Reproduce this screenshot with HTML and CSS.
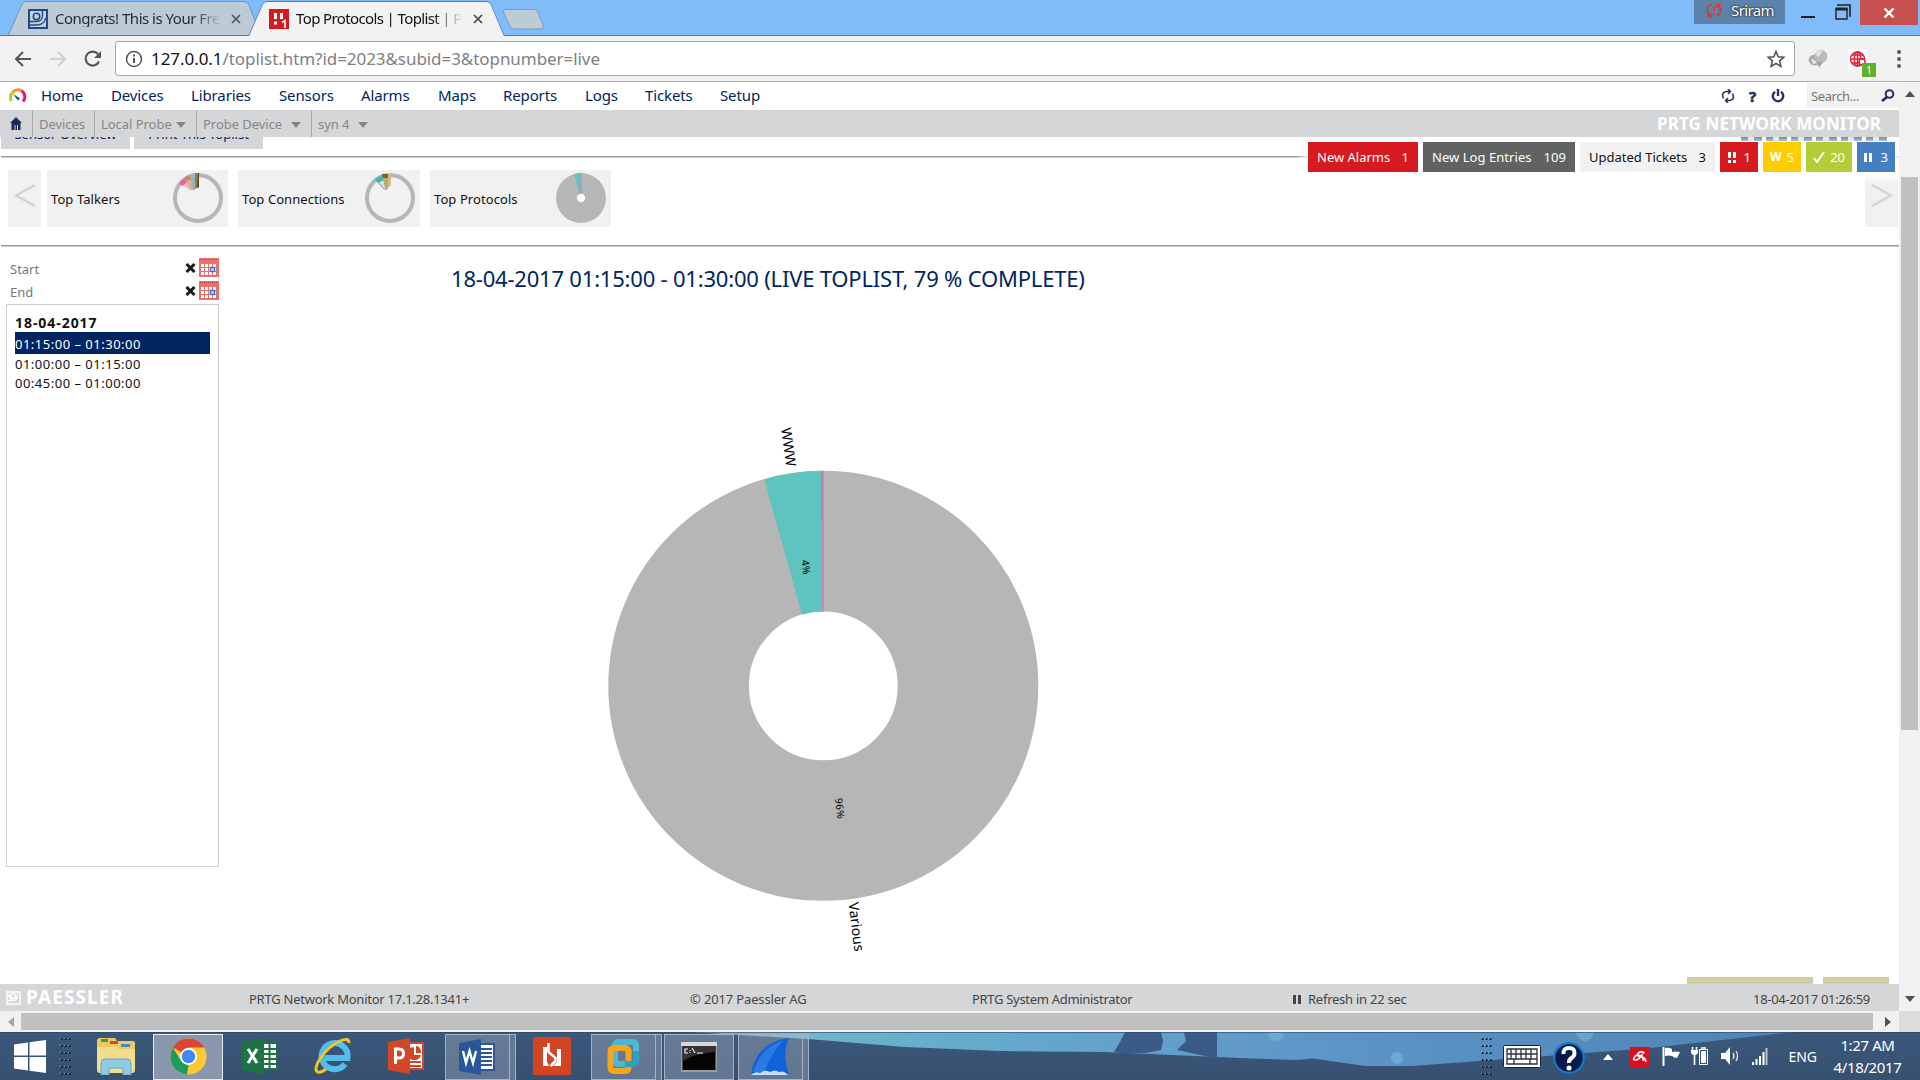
FILE: index.html
```html
<!DOCTYPE html>
<html lang="en">
<head>
<meta charset="utf-8">
<title>Top Protocols | Toplist | PRTG Network Monitor</title>
<link rel="stylesheet" href="styles.css">
</head>
<body>
<header class="tabstrip">
  <svg class="tab-shapes" width="560" height="36" viewBox="0 0 560 36">
    <path d="M8 36L22 4Q23.500 1.500 26 1.500H243Q247 1.500 248.500 4L261 36Z" fill="#bdcbd6" stroke="#6f93b8"/>
    <path d="M0 35.500H249L263 4Q264.500 1.500 267 1.500H486Q489 1.500 490.500 4L504 35.500H560" fill="none" stroke="#4f7db0"/>
    <path d="M249 36.500L263 4.500Q264.500 2 267 2H486Q489 2 490.500 4.500L504 36.500Z" fill="#f2f2f2"/>
    <path d="M505 9.500H534Q536.500 9.500 537.500 12L543.500 26Q544 29 541 29H514Q511 29 510 26L503.500 12Q503 9.500 505 9.500Z" fill="#bdcbd6" stroke="#7f9dbd"/>
  </svg>
  <div class="tab tab-first">
    <svg width="20" height="20" viewBox="0 0 20 20"><rect x="1" y="1" width="18" height="18" fill="#c3cfdc" stroke="#23488a" stroke-width="2"/><circle cx="8.500" cy="7.500" r="3.200" fill="none" stroke="#23488a" stroke-width="1.500"/><path d="M2 12.500H8.500Q14.500 12.500 14.500 6V2M2 16H9Q17 15.500 17.500 9" fill="none" stroke="#23488a" stroke-width="1.300"/></svg>
    <span class="tab-title">Congrats! This is Your Fre</span>
    <svg width="10" height="10" viewBox="0 0 10 10"><path d="M1 1l8 8M9 1l-8 8" stroke="#555" stroke-width="1.700"/></svg>
  </div>
  <div class="tab tab-active">
    <svg width="20" height="20" viewBox="0 0 20 20"><rect width="20" height="20" fill="#d71920"/><path d="M5 4h3v6H5zM11 4h3v6h-3zM5 12.500h3v3H5z" fill="#fff"/><path d="M13 13.500l3-2v7.500" fill="none" stroke="#fff" stroke-width="1.600"/></svg>
    <span class="tab-title">Top Protocols | Toplist | P</span>
    <svg width="10" height="10" viewBox="0 0 10 10"><path d="M1 1l8 8M9 1l-8 8" stroke="#444" stroke-width="1.700"/></svg>
  </div>
  <div class="window-tools">
    <div class="profile">
      <svg width="16" height="15" viewBox="0 0 16 15" fill="none" stroke="#d83a2c" stroke-width="1.700"><path d="M5.500 1.500H4Q1.500 3 1.500 7Q1.500 11 4 13M11 13.500Q14.500 11 14.500 7.500Q14.500 4 11.500 2M1 12.500l3.500 1V10M15 1.500h-4V5M8 3v5M8 10v2"/></svg>
      <span>Sriram</span>
    </div>
    <svg class="win-icon" width="14" height="20" viewBox="0 0 14 20"><path d="M0 17h14" stroke="#222" stroke-width="2"/></svg>
    <svg class="win-max" width="16" height="16" viewBox="0 0 16 16"><path d="M3 2V1h12v11h-1" fill="none" stroke="#222" stroke-width="1.600"/><path d="M1 5h11v10H1z" fill="none" stroke="#222" stroke-width="1.400"/><path d="M.5 5h12" stroke="#222" stroke-width="3"/></svg>
    <div class="win-close"><svg width="12" height="10" viewBox="0 0 12 10"><path d="M1.500 .5l9 9M10.500 .5l-9 9" stroke="#fff" stroke-width="2.400"/></svg></div>
  </div>
</header>

<div class="toolbar">
  <svg class="nav-arrow" width="18" height="16" viewBox="0 0 18 16" fill="none" stroke="#555" stroke-width="2"><path d="M17 8H2M9 1L2 8l7 7"/></svg>
  <svg class="nav-arrow" width="18" height="16" viewBox="0 0 18 16" fill="none" stroke="#d0d0d0" stroke-width="2"><path d="M1 8h15M9 1l7 7-7 7"/></svg>
  <svg class="nav-reload" width="18" height="18" viewBox="0 0 18 18"><path d="M15 11.500A7 7 0 1 1 14 4" fill="none" stroke="#555" stroke-width="2.200"/><path d="M17 1v7h-7z" fill="#555"/></svg>
  <div class="url">
    <svg width="18" height="18" viewBox="0 0 18 18"><circle cx="9" cy="9" r="7.500" fill="none" stroke="#555" stroke-width="1.500"/><path d="M9 8v5M9 4.500v2" stroke="#555" stroke-width="2"/></svg>
    <span class="url-text"><b>127.0.0.1</b>/toplist.htm?id=2023&amp;subid=3&amp;topnumber=live</span>
    <svg width="18" height="18" viewBox="0 0 18 18"><path d="M9 1.500l2.200 5.200 5.600.5-4.200 3.700 1.300 5.500L9 13.500l-4.900 2.900 1.300-5.500L1.200 7.200l5.600-.5z" fill="none" stroke="#555" stroke-width="1.600"/></svg>
  </div>
  <svg class="ext-globe" width="20" height="20" viewBox="0 0 20 20"><ellipse cx="7.500" cy="11" rx="7" ry="5.500" fill="#aaa"/><circle cx="13" cy="7.500" r="6.500" fill="#bbb"/><path d="M8 4q3-3 6-2-1 4-5 6zM3 10q4 0 6 4l-4 1z" fill="#e3e3e3"/><path d="M10 13l1 6 4-6z" fill="#a0a0a0"/></svg>
  <div class="ext-badged">
    <svg width="20" height="20" viewBox="0 0 20 20"><rect width="20" height="20" rx="1" fill="#fff"/><g fill="none" stroke="#e2203a" stroke-width="1.400"><circle cx="9.500" cy="10" r="7"/><ellipse cx="9.500" cy="10" rx="3.200" ry="7"/><path d="M2.500 10h14M4 6h11M4 14h10M9.500 3v14"/></g><circle cx="14" cy="13" r="3" fill="#fff" stroke="#e2203a" stroke-width="1.500"/></svg>
    <span class="ext-count">1</span>
  </div>
  <svg class="menu-dots" width="6" height="18" viewBox="0 0 6 18" fill="#5a5a5a"><circle cx="3" cy="2" r="2"/><circle cx="3" cy="9" r="2"/><circle cx="3" cy="16" r="2"/></svg>
</div>

<div class="viewport">
  <div class="page">
    <nav class="mainnav">
      <svg width="18" height="16" viewBox="0 0 18 16" fill="none" stroke-width="3"><path d="M2.500 13A7 7 0 0 1 3.500 4.500" stroke="#b4cc38"/><path d="M3.500 4.500A7 7 0 0 1 12.500 2.800" stroke="#f59b1c"/><path d="M12.500 2.800A7 7 0 0 1 14 13.500" stroke="#e5196e"/><path d="M4 6l7 4.500-2 2z" fill="#1b3a73"/></svg>
      <a class="n-home">Home</a><a class="n-devices">Devices</a><a class="n-libs">Libraries</a><a class="n-sensors">Sensors</a><a class="n-alarms">Alarms</a><a class="n-maps">Maps</a><a class="n-reports">Reports</a><a class="n-logs">Logs</a><a class="n-tickets">Tickets</a><a>Setup</a>
      <div class="nav-tools">
        <svg width="14" height="14" viewBox="0 0 14 14" fill="none" stroke="#27325c" stroke-width="1.500"><path d="M9.500 2.500H5Q1.500 3.500 1.500 6.500L2.500 9.500M4.500 11.500H9Q12.500 10.500 12.500 7.500L11.500 4.500M7 0l2.500 2.500L7 5M7 9l-2.500 2.500L7 14"/></svg>
        <b class="help">?</b>
        <svg width="14" height="14" viewBox="0 0 14 14" fill="none" stroke="#27325c" stroke-width="2.400"><path d="M4 2.800A5.200 5.200 0 1 0 10 2.800M7 0v7"/></svg>
        <div class="search"><span>Search...</span><svg width="14" height="13" viewBox="0 0 14 13"><circle cx="8.500" cy="5" r="3.800" fill="none" stroke="#27325c" stroke-width="2"/><path d="M6 8l-5 4" stroke="#27325c" stroke-width="2.800"/></svg></div>
      </div>
    </nav>
    <div class="crumbs">
      <div class="crumb c-home"><svg width="12" height="13" viewBox="0 0 12 13"><path d="M6 0l6 6H0zM1.500 6h9v7h-9z" fill="#1d2b5c"/><path d="M4.500 8h1v5h-1zM7 8h1v5H7z" fill="#d5d6d8"/></svg></div>
      <div class="crumb c-devices">Devices</div>
      <div class="crumb c-probe">Local Probe<i></i></div>
      <div class="crumb c-device">Probe Device<i></i></div>
      <div class="crumb c-last">syn 4<i></i></div>
      <b class="brand">PRTG NETWORK MONITOR</b>
    </div>

    <main class="content">
      <div class="actions"><a>Sensor Overview</a><a>Print This Toplist</a></div>
      <hr class="rule">
      <div class="cards">
        <div class="pager"><svg width="22" height="23" viewBox="0 0 22 23"><path d="M21 1L2 11.500 21 22" fill="none" stroke="#d3d3d3" stroke-width="2.500"/></svg></div>
        <div class="card"><span>Top Talkers</span>
          <svg width="50" height="50" viewBox="0 0 50 50"><circle cx="25" cy="25" r="23" fill="none" stroke="#b6b6b6" stroke-width="4"/><path d="M6 10L12 6 20 16 17 17z" fill="#f3b7cf"/><path d="M6 10L13 4 16 8 9 13z" fill="#ee5fa0"/><path d="M12 5l5-3 5 15h-5z" fill="#d6b48e"/><path d="M12 4l5-2 1 4-4 2z" fill="#c98b37"/><path d="M17 2l6-2v15l-3 2z" fill="#9fb0b4"/><path d="M16 2l5-2 1 4-4 1z" fill="#8bbbe0"/><path d="M22 0h4v14l-4 2z" fill="#8a8250"/><path d="M25 0h1v14l-2 1z" fill="#5d471c"/></svg>
        </div>
        <div class="card"><span>Top Connections</span>
          <svg width="50" height="50" viewBox="0 0 50 50"><circle cx="25" cy="25" r="23" fill="none" stroke="#b6b6b6" stroke-width="4"/><path d="M11 7l7-4 4 13h-3z" fill="#cfe5e2" stroke="#87948c"/><path d="M10 6l7-4 2 5-6 3z" fill="#41b8ae"/><path d="M17 1h6v14h-3z" fill="#c5a36b"/><path d="M17 1h6v4h-5z" fill="#876016"/><path d="M23 0h3v12l-3 3z" fill="#c9bf8e"/></svg>
        </div>
        <div class="card"><span>Top Protocols</span>
          <svg width="50" height="50" viewBox="0 0 50 50"><circle cx="25" cy="25" r="25" fill="#b6b6b6"/><path d="M25 25L18 1A25 25 0 0 1 25 0z" fill="#5dc4bf"/><path d="M25 0v25" stroke="#cc86b0"/><circle cx="25" cy="25" r="4.200" fill="#fff"/></svg>
        </div>
        <div class="pager pager-next"><svg width="22" height="23" viewBox="0 0 22 23"><path d="M1 1l19 10.500L1 22" fill="none" stroke="#d3d3d3" stroke-width="2.500"/></svg></div>
      </div>
      <hr class="rule">
      <div class="columns">
        <aside class="sidebar">
          <div class="field"><span>Start</span>
            <svg width="11" height="10" viewBox="0 0 11 10"><path d="M1.500 1l8 8M9.500 1l-8 8" stroke="#1a1a1a" stroke-width="3"/></svg>
            <svg width="20" height="19" viewBox="0 0 20 19"><rect width="20" height="19" fill="#ee6f68"/><path d="M1 1.500h18" stroke="#b34a48" stroke-dasharray="1 1"/><path d="M2 7.500h15.500M2 11.500h15.500M2 15.500h15.500" stroke="#fff" stroke-width="3" stroke-dasharray="3 1"/><rect x="11.500" y="9.500" width="4" height="4" fill="#cfe0fb" stroke="#3577e0" stroke-width="1.500"/></svg>
          </div>
          <div class="field"><span>End</span>
            <svg width="11" height="10" viewBox="0 0 11 10"><path d="M1.500 1l8 8M9.500 1l-8 8" stroke="#1a1a1a" stroke-width="3"/></svg>
            <svg width="20" height="19" viewBox="0 0 20 19"><rect width="20" height="19" fill="#ee6f68"/><path d="M1 1.500h18" stroke="#b34a48" stroke-dasharray="1 1"/><path d="M2 7.500h15.500M2 11.500h15.500M2 15.500h15.500" stroke="#fff" stroke-width="3" stroke-dasharray="3 1"/><rect x="11.500" y="9.500" width="4" height="4" fill="#cfe0fb" stroke="#3577e0" stroke-width="1.500"/></svg>
          </div>
          <div class="listbox">
            <b>18-04-2017</b>
            <div class="option selected">01:15:00 – 01:30:00</div>
            <div class="option">01:00:00 – 01:15:00</div>
            <div class="option">00:45:00 – 01:00:00</div>
          </div>
        </aside>
        <section class="chart">
          <h1>18-04-2017 01:15:00 - 01:30:00 (LIVE TOPLIST, 79 % COMPLETE)</h1>
          <svg class="donut" width="480" height="560" viewBox="583 410 480 560">
            <circle cx="823.300" cy="685.800" r="144.700" fill="none" stroke="#b6b6b6" stroke-width="140.600"/>
            <path d="M764.300 479.200A215 215 0 0 1 823 470.800V611.500A74.500 74.500 0 0 0 802 614.500Z" fill="#5dc4bf"/>
            <path d="M821.500 471v47" stroke="#6e9f9c"/>
            <path d="M823 470.800v141" stroke="#cc86b0" stroke-width="2"/>
            <text class="name" transform="translate(781 428.500) rotate(82)">WWW</text>
            <text class="pct" transform="translate(801.500 560.500) rotate(82)">4%</text>
            <text class="pct" transform="translate(835 798.500) rotate(83)">96%</text>
            <text class="name" transform="translate(848.500 903) rotate(83)">Various</text>
          </svg>
        </section>
      </div>
      <div class="status">
        <div class="chip alarm"><span>New Alarms</span><span>1</span></div>
        <div class="chip log"><span>New Log Entries</span><span>109</span></div>
        <div class="chip ticket"><span>Updated Tickets</span><span>3</span></div>
        <div class="chip down"><svg width="10" height="11" viewBox="0 0 10 11" fill="#fff"><path d="M1 0h3v6H1zM6 0h3v6H6zM1 8h3v3H1zM6 8h3v3H6z"/></svg><span>1</span></div>
        <div class="chip warn"><b>W</b><span>5</span></div>
        <div class="chip ok"><svg width="12" height="12" viewBox="0 0 12 12"><path d="M1 7l3 4 7-10" fill="none" stroke="#fff" stroke-width="2"/></svg><span>20</span></div>
        <div class="chip paused"><svg width="8" height="9" viewBox="0 0 8 9" fill="#fff"><path d="M0 0h3v9H0zM5 0h3v9H5z"/></svg><span>3</span></div>
      </div>
      <div class="page-tools"><i></i><i></i><i></i><i></i><i></i><i></i></div>
      <div class="hints"><i></i><i></i></div>
    </main>

    <footer class="footer">
      <svg width="15" height="14" viewBox="0 0 15 14" fill="none" stroke="#fff" stroke-width="1.400"><path d="M1 1h13v12H1z"/><circle cx="7" cy="5" r="2.400"/><path d="M2 9.500h5q4.500 0 4.500-6.500M3 3q0 5 4 5"/></svg>
      <b class="paessler">PAESSLER</b>
      <span class="f-version">PRTG Network Monitor 17.1.28.1341+</span>
      <span class="f-copy">© 2017 Paessler AG</span>
      <span class="f-user">PRTG System Administrator</span>
      <svg class="f-pause" width="8" height="9" viewBox="0 0 8 9" fill="#444"><path d="M0 0h3v9H0zM5 0h3v9H5z"/></svg>
      <span class="f-refresh">Refresh in 22 sec</span>
      <span class="f-time">18-04-2017 01:26:59</span>
    </footer>
  </div>
  <div class="vscroll">
    <svg width="10" height="6" viewBox="0 0 10 6"><path d="M5 0l5 6H0z" fill="#505050"/></svg>
    <div class="vtrack"><div class="vthumb"></div></div>
    <svg width="10" height="6" viewBox="0 0 10 6"><path d="M5 6L0 0h10z" fill="#505050"/></svg>
  </div>
  <div class="hscroll">
    <svg width="6" height="10" viewBox="0 0 6 10"><path d="M0 5l6-5v10z" fill="#a3a3a3"/></svg>
    <div class="hthumb"></div>
    <svg width="6" height="10" viewBox="0 0 6 10"><path d="M6 5L0 0v10z" fill="#505050"/></svg>
  </div>
  <div class="corner"></div>
</div>

<div class="taskbar">
  <svg class="wallpaper" width="1920" height="48" viewBox="0 0 1920 48">
    <defs>
      <linearGradient id="sky" x1="0" x2="1"><stop offset="0" stop-color="#7db8d0"/><stop offset=".18" stop-color="#67b0cb"/><stop offset=".42" stop-color="#62a0cb"/><stop offset=".6" stop-color="#5c94c7"/><stop offset="1" stop-color="#4f83b5"/></linearGradient>
      <linearGradient id="shade" x2="0" y2="1"><stop offset="0" stop-color="#3b587b"/><stop offset="1" stop-color="#36506f"/></linearGradient>
    </defs>
    <rect width="1920" height="48" fill="url(#shade)"/>
    <path d="M690 0H1794L1650 16 1560 23 1412 34 1365 34 1313 26.500 1296 28 1240 26 1105 20 1000 19 905 15 808 7Z" fill="url(#sky)"/>
    <path d="M1125 0l-5 10-6 10 8 1h24l15-3 2-9-2-9zM1184 0l2 9-9 9 14 3 14 3 12 3V0z" fill="#3a5b85"/>
    <circle cx="1276" cy="1" r="8" fill="#6fb5cc" opacity=".7"/><circle cx="1397" cy="26" r="6" fill="#70afd3" opacity=".8"/><circle cx="1585" cy="0" r="9" fill="#6fb5cc" opacity=".6"/>
    <path d="M0 .5h1920" stroke="#2c4665" opacity=".6"/>
  </svg>
  <div class="tasks">
    <svg class="start" width="32" height="33" viewBox="0 0 32 33" fill="#fff"><path d="M0 4.500L14 2.500V15.500H0zM15.500 2.200L32 0V15.500H15.500zM0 17h14V30.500L0 28.500zM15.500 17H32V33L15.500 30.700z"/></svg>
    <svg class="grip" width="12" height="40" viewBox="0 0 12 40"><path d="M1.500 1v39M5.500 1v39M9.500 1v39" stroke="#111c29" stroke-width="2" stroke-dasharray="2 5"/><path d="M.5 1v39M4.500 1v39M8.500 1v39" stroke="#9fb0c4" stroke-dasharray="1 6"/></svg>
    <svg class="explorer" width="40" height="38" viewBox="0 0 40 38"><path d="M4 1h15l2 3h16q2 0 2 3v24q0 3-3 3H4q-3 0-3-3V4q0-3 3-3z" fill="#e9cb62"/><path d="M5 2h7v3H5z" fill="#3b9c47"/><path d="M14 4h8v3h-8z" fill="#d8472d"/><path d="M25 7h9v3h-9z" fill="#3a8bd0"/><path d="M1 10h20l2 2h16v21q0 3-3 3H4q-3 0-3-3z" fill="#f5de8b"/><path d="M5 38V26q0-4 4-4h22q4 0 4 4v12h-8v-7H13v7z" fill="#8fcbe6" stroke="#5da7cf"/></svg>
    <div class="tile active"><svg width="37" height="37" viewBox="0 0 37 37"><circle cx="18.500" cy="18.500" r="18" fill="#fbc931"/><path d="M2.900 9.500A18 18 0 0 1 34.200 9.500H18.500L11 14z" fill="#dc4437"/><path d="M2.900 9.500L11 23 18.500 27.500 17 36.500A18 18 0 0 1 2.900 9.500z" fill="#1c9c5a"/><circle cx="18.500" cy="18.500" r="8.400" fill="#fff"/><circle cx="18.500" cy="18.500" r="6.700" fill="#4285f4"/></svg></div>
    <svg class="excel" width="37" height="36" viewBox="0 0 37 36"><path d="M20 5h15v26H20z" fill="#fff" stroke="#1f7244" stroke-width="2"/><path d="M21 11h13M21 16h13M21 21h13M21 26h13M27.500 6v24" stroke="#1f7244" stroke-width="2"/><path d="M0 4L22 0v36L0 32z" fill="#1f7244"/><path d="M6 11l9 14M15 11L6 25" stroke="#fff" stroke-width="3"/></svg>
    <svg class="ie" width="38" height="38" viewBox="0 0 38 38"><path d="M31 27A13 13 0 1 1 33.500 21H11" fill="none" stroke="#54bdec" stroke-width="6"/><path d="M4 35C-3 33 9 12 26 4Q35 0 35 6" fill="none" stroke="#f2c521" stroke-width="3"/><path d="M4 35Q7 36 12 32" fill="none" stroke="#f2c521" stroke-width="3"/></svg>
    <svg class="ppt" width="37" height="36" viewBox="0 0 37 36"><path d="M20 5h15v26H20z" fill="#fff" stroke="#d24726" stroke-width="2"/><path d="M22 24h11M22 28h11" stroke="#d24726" stroke-width="2"/><path d="M26 9v8h7a7 7 0 0 1-12 3V10zM28 8q5 0 5 7h-5z" fill="#d24726"/><path d="M0 4L22 0v36L0 32z" fill="#d24726"/><path d="M7.500 26V11H11q4.500 0 4.500 4.500T11 20H8" fill="none" stroke="#fff" stroke-width="3"/></svg>
    <div class="tile stacked t-word"><svg width="37" height="36" viewBox="0 0 37 36"><path d="M20 5h15v26H20z" fill="#fff" stroke="#2b579a" stroke-width="2"/><path d="M21 10h12M21 14h12M21 18h12M21 22h12M21 26h12" stroke="#2b579a" stroke-width="2"/><path d="M0 4L22 0v36L0 32z" fill="#2b579a"/><path d="M4 12l3 12 3.500-12L14 24l3-12" fill="none" stroke="#fff" stroke-width="2.400"/></svg></div>
    <svg class="pdf" width="38" height="38" viewBox="0 0 38 38"><path d="M0 0h38v38H0z" fill="#d14524"/><path d="M10 10h4v15l2 4h-6zM24 12h4v17h-8l4-4z" fill="#fff"/><path d="M15.500 6v9l7 6v3l-5 5" fill="none" stroke="#fff" stroke-width="2.600"/></svg>
    <div class="tile stacked t-vm"><svg width="33" height="37" viewBox="0 0 33 37" fill="none" stroke-width="6"><rect x="8" y="4" width="21" height="22" rx="3" stroke="#4cb8d3"/><rect x="3.500" y="10" width="18" height="23" rx="3" stroke="#f6a51f"/><path d="M18 26h7q4 0 4-3V13" stroke="#2fa0c0"/></svg></div>
    <div class="tile t-cmd"><svg width="36" height="30" viewBox="0 0 36 30"><path d="M0 0h36v30H0z" fill="#9c9c9c"/><path d="M0 0h36v4H0z" fill="#d8d8d8"/><path d="M1.500 4h33v24h-33z" fill="#050505"/><path d="M1.500 4h33v6Q10 12 1.500 20z" fill="#333"/><path d="M7 7H4v4h3M9 8v1M9 10v1M11 6l3 5M16 11h6" fill="none" stroke="#eee" stroke-width="1.200"/></svg></div>
    <div class="tile stacked t-shark"><svg width="40" height="38" viewBox="0 0 40 38"><path d="M0 36C3 18 14 3 38 0 33 9 33 24 38 36Z" fill="#0f62d8"/><path d="M2 34C8 18 16 8 33 2 24 12 16 24 14 34Z" fill="#3a8af0" opacity=".6"/><path d="M0 37q4-4 9-2 5-4 10-1 5-3 9 0 5-2 9 3z" fill="#c7dcf5"/></svg></div>
  </div>
  <div class="tray">
    <svg class="grip" width="12" height="40" viewBox="0 0 12 40"><path d="M1.500 1v39M5.500 1v39M9.500 1v39" stroke="#111c29" stroke-width="2" stroke-dasharray="2 5"/><path d="M.5 1v39M4.500 1v39M8.500 1v39" stroke="#9fb0c4" stroke-dasharray="1 6"/></svg>
    <svg class="kbd" width="38" height="23" viewBox="0 0 38 23"><rect x=".5" y=".5" width="37" height="22" rx="1" fill="#fff" stroke="#223"/><path d="M4 4h30v15H4zM4 9h30M4 14h30M8 4v10M13 4v10M18 4v10M23 4v10M28 4v10M11 14v5M27 14v5" fill="none" stroke="#26303c" stroke-width="1.300"/></svg>
    <svg class="qmark" width="32" height="32" viewBox="0 0 32 32"><circle cx="16" cy="16" r="14.800" fill="#071a4d" stroke="#1779c8" stroke-width="2.200"/><path d="M10.500 12Q10 6 16 6T21.500 11.500Q21.500 14 18.500 16T16 21" fill="none" stroke="#fff" stroke-width="4"/><circle cx="16" cy="26" r="2.500" fill="#fff"/></svg>
    <svg class="up" width="10" height="6" viewBox="0 0 10 6"><path d="M5 0l5 6H0z" fill="#fff"/></svg>
    <svg class="avira" width="20" height="20" viewBox="0 0 20 20"><path d="M0 0h20v20H0z" fill="#dc0f1e"/><path d="M14.500 6Q10 3.500 8 6.500T12.500 10Q16 12 16 15M12.500 7Q9 13 5.500 13T5 9.500Q6.500 7 11 9Q13 10 13.500 14" fill="none" stroke="#fff" stroke-width="1.600"/></svg>
    <svg class="flag" width="18" height="19" viewBox="0 0 18 19"><path d="M1.500 0v19" stroke="#fff" stroke-width="2"/><path d="M3 1q4-1 7 1v3q3-1 8 0l-3 6q-3 0-5-2-3-1-7 0z" fill="#fff"/></svg>
    <svg class="batt" width="18" height="20" viewBox="0 0 18 20" fill="none" stroke="#fff" stroke-width="1"><path d="M8.500 3.500h8v15h-8z"/><path d="M10.500 5.500h4v11h-4z" fill="#fff"/><path d="M10 2h5M3.500 8v11M1.500 1v4M5.500 1v4" stroke-width="1.600"/><path d="M0 4h7v3l-2 2H2L0 7z" fill="#fff" stroke="none"/></svg>
    <svg class="speaker" width="20" height="18" viewBox="0 0 20 18"><path d="M1 6h4l5-6v18l-5-6H1z" fill="#fff"/><path d="M13 6q2 3 0 6M16 4q3 5 0 10" fill="none" stroke="#d6e0ea" stroke-width="1.400"/></svg>
    <svg class="signal" width="16" height="17" viewBox="0 0 16 17" fill="#fff"><path d="M0 14h2v3H0zM3.500 11h2v6h-2zM7 8h2v9H7zM10.500 4h2v13h-2z"/><path d="M13.500 0h2v17h-2z" fill="#b4c0cc"/></svg>
    <span class="lang">ENG</span>
    <div class="clock"><span>1:27 AM</span><span class="date">4/18/2017</span></div>
  </div>
</div>
</body>
</html>
```
FILE: styles.css
```css
* { box-sizing: border-box; }
body { margin: 0; width: 1920px; height: 1080px; overflow: hidden; display: flex; flex-direction: column; font: 13px/18px "Noto Sans", "Open Sans", sans-serif; color: #111; background: #fff; }
svg { display: block; flex: none; }
span, a, b { white-space: nowrap; }

/* Browser tab strip */
.tabstrip { position: relative; height: 36px; flex: none; display: flex; background: #80bbfa; border-bottom: 1px solid #4f7db0; }
.tab-shapes { position: absolute; left: 0; top: 0; }
.tab { position: relative; display: flex; align-items: center; height: 36px; padding-top: 1px; font-size: 15px; }
.tab-first { width: 241px; margin-left: 28px; }
.tab-active { width: 230px; }
.tab-title { width: 167px; margin: -1px 9px 0 7px; overflow: hidden; letter-spacing: -.49px; color: #1c2b38; -webkit-mask-image: linear-gradient(90deg, #000 82%, transparent); mask-image: linear-gradient(90deg, #000 82%, transparent); }
.tab-active .tab-title { letter-spacing: -.62px; color: #111; margin-right: 10px; }
.window-tools { margin-left: auto; display: flex; margin-right: 2px; }
.profile { width: 91px; height: 24px; padding: 0 0 4px 12px; display: flex; align-items: center; gap: 9px; background: #5a82ab; color: #fff; font-size: 15px; letter-spacing: -.6px; text-shadow: 0 0 2px #222, 0 0 2px #222; }
.win-icon { margin-left: 16px; }
.win-max { margin: 4px 9px 0 20px; }
.win-close { width: 58px; height: 25px; display: flex; align-items: center; justify-content: center; background: #c75050; }

/* Address bar */
.toolbar { height: 46px; flex: none; display: flex; align-items: center; padding-left: 14px; background: #f2f2f2; border-bottom: 1px solid #b0b0b0; }
.nav-arrow { margin-right: 17px; }
.nav-reload { margin-right: 12px; }
.url { width: 1680px; height: 35px; margin-left: 1px; display: flex; align-items: center; padding: 0 9px 0 9px; background: #fff; border: 1px solid #a6a6a6; border-radius: 3px; }
.url-text { flex: 1; margin-left: 8px; font-size: 17px; line-height: 24px; letter-spacing: -.06px; color: #808080; }
.url-text b { font-weight: 400; color: #111; }
.ext-globe { margin-left: 13px; }
.ext-badged { position: relative; margin-left: 20px; }
.ext-count { position: absolute; left: 14px; top: 14px; width: 14px; height: 14px; background: #5fb22b; color: #fff; font-size: 10px; line-height: 15px; text-align: center; }
.menu-dots { margin-left: 28px; }

/* Page area and scrollbars */
.viewport { height: 950px; flex: none; display: grid; grid-template: 929px 21px / 1899px 21px; }
.page { display: flex; flex-direction: column; background: #fff; }
.vscroll { display: flex; flex-direction: column; align-items: center; background: #f1f1f1; padding: 9px 0 9px; }
.vtrack { flex: 1; padding: 80px 0 0; }
.vthumb { width: 17px; height: 553px; background: #c1c1c1; }
.hscroll { display: flex; align-items: center; padding: 0 8px; background: #f1f1f1; }
.hthumb { width: 1852px; height: 17px; margin: 0 12px 0 7px; background: #c1c1c1; }
.corner { background: #dcdcdc; }

/* Site navigation */
.mainnav { height: 28px; flex: none; display: flex; align-items: center; padding: 0 0 1px 9px; font-size: 15px; letter-spacing: -.12px; color: #002560; }
.mainnav a { width: 80px; margin-top: -1px; }
.mainnav a.n-home { margin-left: 14px; width: 70px; }
.mainnav a.n-libs { width: 88px; }
.mainnav a.n-sensors { width: 82px; }
.mainnav a.n-alarms { width: 77px; }
.mainnav a.n-maps { width: 65px; }
.mainnav a.n-reports { width: 82px; }
.mainnav a.n-logs { width: 60px; }
.mainnav a.n-tickets { width: 75px; }
.nav-tools { margin-left: auto; display: flex; align-items: center; }
.help { width: 8px; margin: 0 14px; font-size: 15px; color: #27325c; -webkit-text-stroke: .6px #27325c; }
.search { width: 92px; height: 25px; margin-left: 22px; padding: 0 4px 0 4px; display: flex; align-items: center; justify-content: space-between; background: #f1f1f1; font-size: 13px; letter-spacing: -.4px; color: #777; }

/* Breadcrumbs */
.crumbs { height: 27px; flex: none; display: flex; align-items: stretch; background: #d5d6d8; color: #868686; }
.crumb { display: flex; align-items: center; justify-content: space-between; padding: 0 10px 0 6px; border-left: 1px solid #a9a9a9; letter-spacing: -.04px; }
.crumb i { border: 5px solid transparent; border-top: 6px solid #868686; border-bottom: 0; margin-top: 2px; }
.c-home { width: 32px; border: 0; padding-left: 10px; }
.c-devices { width: 62px; }
.c-probe { width: 102px; }
.c-device { width: 115px; }
.c-last { width: 67px; }
.brand { margin-left: auto; margin-right: 18px; align-self: center; font-size: 17px; letter-spacing: .12px; color: #fff; }

/* Toplist content */
.content { position: relative; flex: 1; min-height: 0; overflow: hidden; padding-left: 1px; }
.actions { display: flex; gap: 4px; height: 29px; margin-top: -17px; line-height: 29px; text-align: center; color: #002560; }
.actions a { width: 129px; background: #d5d6d8; }
.rule { height: 2px; margin: 7px 0 12px; border: 0; background: #999; border-bottom: 1px solid #ccc; }
.cards { display: flex; height: 57px; padding-left: 7px; gap: 10px; margin-bottom: 18px; }
.cards + .rule { margin: 0; }
.pager { width: 33px; display: flex; align-items: center; justify-content: center; background: #f1f1f1; margin-right: -4px; padding-bottom: 6px; }
.pager-next { margin: 0 1px 0 auto; background: linear-gradient(#fdfdfd, #f1f1f1 22%); }
.card { width: 181px; display: flex; justify-content: space-between; padding: 3px 5px 4px 4px; background: #f1f1f1; align-items: center; color: #111; letter-spacing: .08px; }
.card + .card { width: 182px; }
.card + .card + .card { width: 181px; }
.card span { margin-top: 2px; }
.columns { display: flex; margin-top: 11px; }
.sidebar { width: 218px; padding-left: 5px; }
.field { height: 23px; display: flex; align-items: flex-start; color: #777; }
.field span { flex: 1; margin: 2px 0 0 4px; }
.field svg:nth-of-type(1) { margin: 5px 3px 0 0; }
.listbox { height: 563px; border: 1px solid #cfcfcf; padding: 8px 8px 0; }
.listbox b { display: block; height: 19px; font-size: 14px; line-height: 19px; letter-spacing: .95px; }
.option { height: 19px; line-height: 20px; letter-spacing: .5px; }
.option.selected { height: 22px; line-height: 25px; background: #002560; color: #fff; }
.chart { flex: 1; padding-left: 232px; }
.chart h1 { margin: 4px 0 0; font-size: 22px; line-height: 32px; font-weight: 400; letter-spacing: -.2px; color: #002560; white-space: nowrap; }
.donut { margin: 116px 0 0 132px; }
.donut text { fill: #000; font-size: 14px; }
.donut .pct { font-size: 10px; letter-spacing: .45px; }

/* Overlays over the scrolled content */
.page-tools { position: absolute; right: 12px; top: 0; display: flex; gap: 4px; }
.page-tools i { width: 21px; height: 4px; background: linear-gradient(90deg, transparent 32%, #e4e9f0 32% 60%, transparent 60%), linear-gradient(#7486aa, #b4bfd2); }
.status { position: absolute; right: 4px; top: 5px; display: flex; gap: 5px; box-shadow: 0 0 10px 5px #fff; background: #fff; }
.chip { height: 30px; display: flex; align-items: center; justify-content: space-between; padding: 0 9px 1px 9px; color: #fff; }
.alarm { width: 110px; background: #d71920; }
.log { width: 152px; background: #606362; letter-spacing: .05px; }
.ticket { width: 135px; background: #f1f1f1; color: #111; }
.down { width: 38px; background: #d71920; }
.warn { width: 38px; background: #fc0; }
.ok { width: 46px; background: #b4cc38; }
.paused { width: 38px; background: #447fc1; }
.down, .warn, .ok, .paused { padding: 0 7px 0 7px; }
.warn b { font-size: 12px; }
.hints { position: absolute; right: 10px; bottom: 0; display: flex; gap: 10px; }
.hints i { width: 66px; height: 7px; background: #d4cd9f; }
.hints i:first-child { width: 126px; }

/* Page footer */
.footer { height: 27px; flex: none; display: flex; align-items: center; padding: 3px 29px 0 6px; background: #d5d6d8; color: #444; letter-spacing: -.25px; }
.footer svg { margin-bottom: 3px; }
.footer .f-pause { margin-bottom: 0; }
.paessler { width: 223px; margin: -5px 0 0 5px; font-size: 19px; letter-spacing: 1.1px; color: #fff; }
.f-version { width: 441px; }
.f-copy { width: 282px; letter-spacing: -.15px; }
.f-user { width: 321px; letter-spacing: -.3px; }
.f-refresh { margin-left: 7px; }
.f-time { margin-left: auto; letter-spacing: -.31px; }

/* Windows taskbar */
.taskbar { position: relative; flex: 1; display: flex; justify-content: space-between; }
.wallpaper { position: absolute; left: 0; top: 0; }
.tasks, .tray { position: relative; display: flex; align-items: center; }
.tasks { padding-left: 14px; }
.grip { margin: 2px 0 0 14px; }
.explorer { margin-left: 24px; }
.tile { width: 70px; height: 46px; margin-top: 1px; display: flex; align-items: center; justify-content: center; background: #b9c2cf55; border: 1px solid #a3b2c5; position: relative; }
.tile.active { margin-left: 17px; background: #8897ab; border-color: #e6ebf1; }
.tile.stacked { width: 65px; margin-right: 5px; }
.tile.stacked::after { content: ""; position: absolute; left: 64px; top: -1px; width: 5px; height: 46px; border: 1px solid #a3b2c5; border-left: 0; background: #b9c2cf55; }
.excel { margin-left: 19px; }
.ie { margin-left: 35px; }
.ppt { margin-left: 36px; }
.t-word { margin-left: 20px; }
.pdf { margin-left: 18px; }
.t-vm { margin-left: 20px; }
.t-cmd { margin-left: 3px; }
.t-shark { margin-left: 4px; }
.tray { color: #fff; padding-right: 18px; }
.tray .grip { margin-left: 0; }
.kbd { margin: 1px 0 0 10px; }
.qmark { margin: 3px 0 0 12px; }
.up { margin: 2px 0 0 18px; }
.avira { margin: 2px 0 0 17px; }
.flag { margin: 0 0 0 12px; }
.batt { margin: 0 0 0 11px; }
.speaker { margin: 0 0 0 11px; }
.signal { margin: 1px 0 0 12px; }
.lang { margin: 2px 0 0 20px; font-size: 14px; }
.clock { width: 69px; margin-left: 16px; display: flex; flex-direction: column; align-items: center; font-size: 15px; line-height: 22px; letter-spacing: -.38px; }
```
